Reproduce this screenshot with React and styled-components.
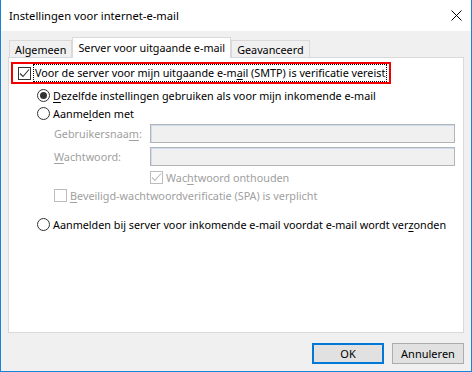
import React from "react";
import styled, { createGlobalStyle } from "styled-components";

const GlobalStyle = createGlobalStyle`
  html, body { margin: 0; padding: 0; background: #fff; }
  body {
    font-family: "Noto Sans", "Open Sans", sans-serif;
    font-size: 10.8px;
    color: #000;
  }
  * { box-sizing: border-box; }
`;

const Window = styled.div`
  width: 472px;
  height: 372px;
  border: 1px solid #1883d7;
  border-top: none;
  display: flex;
  flex-direction: column;
  background: #fff;
`;

const TitleBar = styled.div`
  height: 31px;
  flex-shrink: 0;
  display: flex;
  align-items: center;
  justify-content: space-between;
  padding: 0 9px 0 8px;
  background: #fff;
`;

const TitleText = styled.span`
  font-size: 11.2px;
  color: #000;
`;

const Body = styled.div`
  flex: 1;
  background: #f0f0f0;
  padding: 6px 7px 7px 7px;
  display: flex;
  flex-direction: column;
`;

const Tabs = styled.div`
  display: flex;
  align-items: flex-end;
  height: 20px;
  padding-left: 1px;
  position: relative;
  z-index: 1;
`;

const Tab = styled.div`
  height: ${(p) => (p.$active ? 21 : 17)}px;
  margin-bottom: ${(p) => (p.$active ? -1 : 0)}px;
  padding: ${(p) => (p.$active ? "0 5px 2px" : "1px 5px 0")};
  border: 1px solid #d9d9d9;
  border-bottom: none;
  background: ${(p) => (p.$active ? "#fff" : "#f0f0f0")};
  display: flex;
  align-items: center;
  white-space: nowrap;
`;

const Panel = styled.div`
  height: 276px;
  background: #fff;
  border: 1px solid #d9d9d9;
  padding: 4px 0 0 1px;
  display: flex;
  flex-direction: column;
  align-items: flex-start;
`;

const Highlight = styled.div`
  width: 380px;
  height: 22px;
  border: 2px solid #f00000;
  display: flex;
  align-items: center;
  padding-left: 5px;
  margin-left: 1px;
`;

const FocusLabel = styled.span`
  border: 1px dotted #000;
  height: 18px;
  line-height: 16px;
  padding: 0 1px;
  margin-left: 2px;
  white-space: nowrap;
`;

const Row = styled.div`
  display: flex;
  align-items: center;
  height: 18px;
  margin-left: ${(p) => p.$indent || 0}px;
  margin-top: ${(p) => p.$top || 0}px;
  white-space: nowrap;
  color: ${(p) => (p.$disabled ? "#a0a0a0" : "#000")};
`;

const Label = styled.span`
  margin-left: ${(p) => p.$gap ?? 3}px;
`;

const Key = styled.u`
  text-decoration: underline;
  text-underline-offset: 2px;
  text-decoration-thickness: 1px;
`;

const Box = styled.span`
  width: 13px;
  height: 13px;
  flex-shrink: 0;
  border: 1px solid ${(p) => (p.$disabled ? "#bcbcbc" : "#333")};
  background: #fff;
  display: flex;
  align-items: center;
  justify-content: center;
`;

const RadioCircle = styled.span`
  width: 13px;
  height: 13px;
  flex-shrink: 0;
  border: 1px solid #333;
  border-radius: 50%;
  background: #fff;
  display: flex;
  align-items: center;
  justify-content: center;
  &::after {
    content: "";
    width: 7px;
    height: 7px;
    border-radius: 50%;
    background: ${(p) => (p.$checked ? "#333" : "transparent")};
  }
`;

const Credentials = styled.div`
  display: grid;
  grid-template-columns: 96px 305px;
  row-gap: 4px;
  align-items: center;
  margin-left: 44px;
  margin-top: 2px;
  color: #a0a0a0;
`;

const TextInput = styled.div`
  height: 19px;
  border: 1px solid #b4b4b4;
  background: #f0f0f0;
  box-shadow: inset 1px 1px 0 #cddcf0;
`;

const Footer = styled.div`
  display: flex;
  justify-content: flex-end;
  gap: 8px;
  margin-top: 10px;
`;

const Button = styled.button`
  width: 72px;
  height: 21px;
  padding: 0;
  font-family: inherit;
  font-size: 11px;
  color: #000;
  background: #e1e1e1;
  border: ${(p) => (p.$default ? "2px solid #0078d7" : "1px solid #adadad")};
`;

const Check = ({ color = "#333" }) => (
  <svg width="11" height="11" viewBox="0 0 11 11">
    <polyline points="1,5.5 4,8.5 10,1.5" fill="none" stroke={color} strokeWidth="1.1" />
  </svg>
);

const CloseIcon = () => (
  <svg width="11" height="11" viewBox="0 0 11 11">
    <path d="M0.5 0.5 L10.5 10.5 M10.5 0.5 L0.5 10.5" stroke="#000" strokeWidth="1" />
  </svg>
);

export default function App() {
  return (
    <>
      <GlobalStyle />
      <Window>
        <TitleBar>
          <TitleText>Instellingen voor internet-e-mail</TitleText>
          <CloseIcon />
        </TitleBar>
        <Body>
          <Tabs>
            <Tab>Algemeen</Tab>
            <Tab $active>Server voor uitgaande e-mail</Tab>
            <Tab>Geavanceerd</Tab>
          </Tabs>
          <Panel>
            <Highlight>
              <Box>
                <Check />
              </Box>
              <FocusLabel>
                Voor de server voor mijn uitgaande e-m<Key>a</Key>il (SMTP) is verificatie vereist
              </FocusLabel>
            </Highlight>
            <Row $indent={27} $top={2}>
              <RadioCircle $checked />
              <Label>
                <Key>D</Key>ezelfde instellingen gebruiken als voor mijn inkomende e-mail
              </Label>
            </Row>
            <Row $indent={27}>
              <RadioCircle />
              <Label>
                Aanme<Key>l</Key>den met
              </Label>
            </Row>
            <Credentials>
              <span>
                Gebruikersnaa<Key>m</Key>:
              </span>
              <TextInput />
              <span>
                <Key>W</Key>achtwoord:
              </span>
              <TextInput />
            </Credentials>
            <Row $indent={140} $top={2} $disabled>
              <Box $disabled>
                <Check color="#bcbcbc" />
              </Box>
              <Label>
                Wac<Key>h</Key>twoord onthouden
              </Label>
            </Row>
            <Row $indent={44} $disabled>
              <Box $disabled />
              <Label>
                <Key>B</Key>eveiligd-wachtwoordverificatie (SPA) is verplicht
              </Label>
            </Row>
            <Row $indent={27} $top={11}>
              <RadioCircle />
              <Label>
                Aanmelden bij server voor inkomende e-mail voordat e-mail wordt ver<Key>z</Key>onden
              </Label>
            </Row>
          </Panel>
          <Footer>
            <Button $default>OK</Button>
            <Button>Annuleren</Button>
          </Footer>
        </Body>
      </Window>
    </>
  );
}
